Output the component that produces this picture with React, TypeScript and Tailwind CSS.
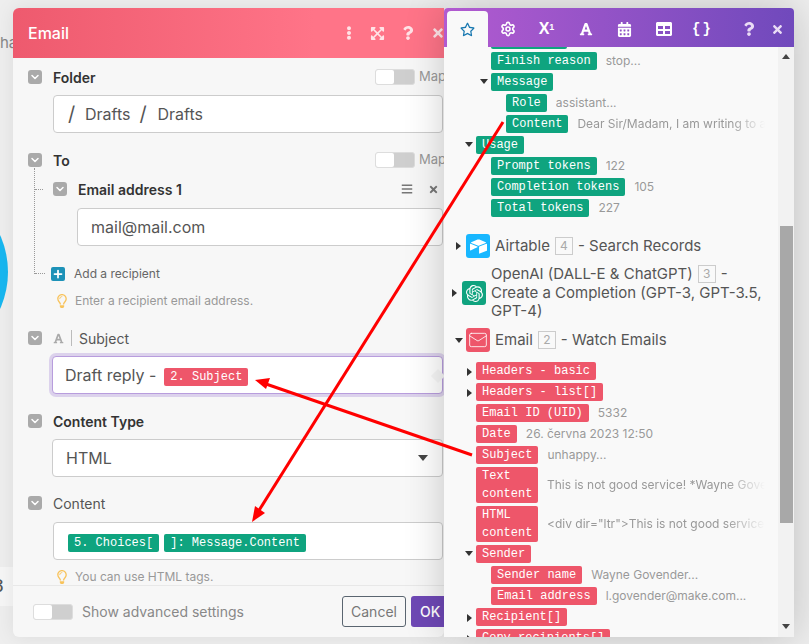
import { ChevronDown, Mail, Plus, Settings } from "lucide-react";
import {
  FaBars,
  FaCalendarAlt,
  FaEllipsisV,
  FaExpandArrowsAlt,
  FaFont,
  FaQuestion,
  FaRegLightbulb,
  FaRegStar,
  FaTable,
  FaTimes,
} from "react-icons/fa";
import { SiAirtable, SiOpenai } from "react-icons/si";

function Chevron({ className = "" }: { className?: string }) {
  return (
    <div className={`flex h-[14px] w-[14px] shrink-0 items-center justify-center rounded-[3px] bg-[#aaaaaa] ${className}`}>
      <ChevronDown size={12} strokeWidth={3} className="text-white" />
    </div>
  );
}

function MapToggle() {
  return (
    <div className="ml-auto flex w-[68px] shrink-0 items-center">
      <Toggle />
      <span className="ml-1 text-[13px] text-[#999999]">Map</span>
    </div>
  );
}

function Toggle() {
  return (
    <div className="h-[16px] w-[40px] shrink-0 rounded-[3px] border border-[#dddddd] bg-[#cfcfcf]">
      <div className="h-[14px] w-[18px] rounded-[2px] bg-white" />
    </div>
  );
}

function Pill({ label, color, className = "" }: { label: string; color: "green" | "red"; className?: string }) {
  return (
    <span
      className={`inline-block shrink-0 rounded-[2px] px-[6px] font-['Liberation_Mono',monospace] text-[12px] leading-[18px] whitespace-pre-wrap text-white ${
        color === "green" ? "bg-[#0fa47f]" : "bg-[#ee566a]"
      } ${className}`}
    >
      {label}
    </span>
  );
}

function Caret({ open }: { open?: boolean }) {
  return open ? (
    <svg width="8" height="5" viewBox="0 0 8 5" className="shrink-0">
      <path d="M0 0h8L4 5z" fill="#333" />
    </svg>
  ) : (
    <svg width="5" height="8" viewBox="0 0 5 8" className="shrink-0">
      <path d="M0 0l5 4-5 4z" fill="#333" />
    </svg>
  );
}

function Row({
  indent,
  label,
  value,
  color,
  caret,
  pillClass,
  fade,
}: {
  indent: string;
  label: string;
  value?: string;
  color: "green" | "red";
  caret?: "open" | "closed";
  pillClass?: string;
  fade?: boolean;
}) {
  return (
    <div className={`relative mb-[3px] flex items-center gap-[9px] pr-[13px] ${indent}`}>
      {caret && (
        <span className="absolute top-[6px] -ml-[11px] flex w-[8px] justify-center">
          <Caret open={caret === "open"} />
        </span>
      )}
      <Pill label={label} color={color} className={pillClass} />
      {value && (
        <span
          className={`min-w-0 overflow-hidden text-[12px] leading-[18px] whitespace-nowrap text-[#999999] ${
            fade ? "[mask-image:linear-gradient(to_right,black_82%,transparent)]" : ""
          }`}
        >
          {value}
        </span>
      )}
    </div>
  );
}

function Badge({ n, className = "" }: { n: number; className?: string }) {
  return (
    <span
      className={`inline-flex h-[18px] w-[18px] shrink-0 items-center justify-center border border-[#cccccc] text-[12px] leading-none text-[#aaaaaa] ${className}`}
    >
      {n}
    </span>
  );
}

function Hint({ text, className = "" }: { text: string; className?: string }) {
  return (
    <div className={`flex items-center ${className}`}>
      <FaRegLightbulb size={14} className="text-[#f8c35c]" />
      <span className="ml-[6px] text-[12px] leading-4 text-[#999999]">{text}</span>
    </div>
  );
}

function Input({ children, className = "" }: { children: React.ReactNode; className?: string }) {
  return (
    <div className={`flex h-[38px] items-center rounded-[4px] border border-[#cccccc] bg-white text-[16px] text-[#555555] ${className}`}>
      {children}
    </div>
  );
}

const tabIcon = "flex h-[36px] w-[39px] items-center justify-center text-white";

export default function App() {
  return (
    <div className="relative h-[644px] w-[809px] overflow-hidden bg-[#eeeeee] font-['Inter',sans-serif]">
      {/* what is behind the dialog */}
      <span className="absolute top-[34px] left-0 text-[15px] leading-[18px] text-[#888888]">ha</span>
      <div className="absolute top-[182px] left-[-172px] h-[180px] w-[180px] rounded-full bg-[#18b7f0]" />
      <div className="absolute top-[567px] left-0 h-[39px] w-[13px] overflow-hidden bg-[#f6f6f6] font-['Liberation_Mono',monospace] text-[20px] leading-[39px] text-[#555555]">
        <span className="-ml-[8px] block">8</span>
      </div>

      <div className="relative flex pt-[8px] pl-[13px]">
        {/* left panel */}
        <div className="flex h-[629px] w-[431px] flex-col overflow-hidden rounded-b-[6px] rounded-tl-[6px] bg-[#f7f7f7] shadow-[0_0_20px_rgba(0,0,0,0.08)]">
          <div className="flex h-[50px] shrink-0 items-center bg-gradient-to-r from-[#ee5a6e] to-[#ff7488] to-70% pl-[15px] text-white">
            <span className="text-[16px] font-medium">Email</span>
            <div className="ml-auto flex shrink-0 items-center text-[#ffe3e7]">
              <FaEllipsisV size={14} className="mr-[14px]" />
              <FaExpandArrowsAlt size={15} className="mr-[16px]" />
              <FaQuestion size={14} className="mr-[16px]" />
              <FaTimes size={14} className="mr-[-1px]" />
            </div>
          </div>

          <div className="min-h-0 flex-1 overflow-hidden pr-[1px] pl-[15px]">
            <div className="mt-[11px] flex h-[16px] items-center">
              <Chevron />
              <span className="ml-[11px] text-[14px] font-semibold text-[#333333]">Folder</span>
              <MapToggle />
            </div>
            <Input className="mt-[10px] ml-[25px] px-[14px]">
              <span className="mr-[9px] w-[8px] text-[20px]">/</span>Drafts
              <span className="mx-[9px] w-[9px] text-[20px]">/</span>Drafts
            </Input>

            <div className="mt-[19px] flex h-[16px] items-center">
              <Chevron />
              <span className="ml-[11px] text-[14px] font-semibold text-[#333333]">To</span>
              <MapToggle />
            </div>

            <div className="relative ml-[7px]">
              {/* dotted tree line */}
              <div className="absolute top-0 left-[-1px] h-[106px] w-[1px] border-l border-dotted border-[#999999]" />
              <div className="absolute top-[21px] left-0 w-[8px] border-t border-dotted border-[#999999]" />
              <div className="absolute top-[105px] left-0 w-[10px] border-t border-dotted border-[#999999]" />

              <div className="ml-[18px] pt-[14px]">
                <div className="flex h-[14px] items-center">
                  <Chevron />
                  <span className="ml-[11px] text-[14px] font-semibold text-[#333333]">Email address 1</span>
                  <FaBars size={12} className="mr-[15px] ml-auto text-[#777777]" />
                  <FaTimes size={11} className="mr-[4px] text-[#777777]" />
                </div>
                <Input className="mt-[12px] ml-[24px] px-[13px]">mail@mail.com</Input>
              </div>

              <div className="mt-[21px] ml-[16px] flex h-[14px] items-center">
                <div className="flex h-[14px] w-[14px] items-center justify-center rounded-[2px] bg-[#1d92b8]">
                  <Plus size={12} strokeWidth={3.5} className="text-white" />
                </div>
                <span className="ml-[9px] text-[12px] text-[#666666]">Add a recipient</span>
              </div>
            </div>

            <Hint text="Enter a recipient email address." className="mt-[12px] ml-[27px]" />

            <div className="mt-[21px] flex h-[16px] items-center">
              <Chevron />
              <FaFont size={11} className="ml-[11px] text-[#aaaaaa]" />
              <div className="mx-[7px] h-[16px] w-[1px] bg-[#bbbbbb]" />
              <span className="text-[14px] text-[#555555]">Subject</span>
            </div>
            <div className="mt-[10px] ml-[24px]">
              <div className="relative flex h-[38px] items-center rounded-[4px] border border-[#b89ddd] bg-white pl-[12px] text-[16px] text-[#555555] shadow-[0_0_0_3px_#dcd2ec]">
                Draft reply -
                <Pill label="2. Subject" color="red" className="mt-[4px] ml-[8px]" />
                <div className="absolute top-[14px] right-[-1px] h-[10px] w-[10px] rotate-45 bg-[#f7f7f7]" />
              </div>
            </div>

            <div className="mt-[19px] flex h-[16px] items-center">
              <Chevron />
              <span className="ml-[11px] text-[14px] font-semibold text-[#333333]">Content Type</span>
            </div>
            <Input className="mt-[10px] ml-[24px] px-[13px]">
              HTML
              <svg width="10" height="6" viewBox="0 0 10 6" className="mr-[1px] ml-auto">
                <path d="M0 0h10L5 6z" fill="#444" />
              </svg>
            </Input>

            <div className="mt-[18px] flex h-[16px] items-center">
              <Chevron />
              <span className="ml-[11px] text-[14px] text-[#555555]">Content</span>
            </div>
            <Input className="mt-[11px] ml-[25px] gap-[5px] px-[14px]">
              <Pill label="5. Choices[" color="green" className="mt-[3px]" />
              <Pill label="]: Message.Content" color="green" className="mt-[3px]" />
            </Input>
            <Hint text="You can use HTML tags." className="mt-[9px] ml-[27px]" />
          </div>

          <div className="flex h-[52px] shrink-0 items-center border-t border-[#e8e8e8] pl-[20px]">
            <Toggle />
            <span className="ml-[9px] text-[14px] text-[#888888]">Show advanced settings</span>
            <div className="mr-[-5px] ml-auto flex shrink-0 items-center gap-[5px]">
              <div className="flex h-[31px] w-[64px] items-center justify-center rounded-[3px] border border-[#5a6570] text-[14px] text-[#777777]">
                Cancel
              </div>
              <div className="flex h-[31px] w-[38px] items-center rounded-[3px] bg-[#6e48b5] pl-[9px] text-[14px] font-medium text-white">
                OK
              </div>
            </div>
          </div>
        </div>

        {/* right panel */}
        <div className="z-10 flex h-[629px] w-[350px] shrink-0 flex-col overflow-hidden rounded-t-[4px] bg-[#f9f9f9] shadow-[0_0_40px_rgba(0,0,0,0.2)]">
          <div className="flex h-[39px] shrink-0 items-end bg-gradient-to-r from-[#b25ad0] to-[#7049bc] pl-[3px]">
            <div className="flex h-[36px] w-[41px] items-center justify-center rounded-t-[4px] bg-[#f9f9f9]">
              <FaRegStar size={15} className="text-[#1878b0]" />
            </div>
            <div className={tabIcon}>
              <Settings size={16} strokeWidth={2.4} />
            </div>
            <div className={tabIcon}>
              <span className="font-['Liberation_Sans',sans-serif] text-[16px] font-bold">
                X<sup className="text-[9px]">1</sup>
              </span>
            </div>
            <div className={tabIcon}>
              <FaFont size={14} />
            </div>
            <div className={tabIcon}>
              <FaCalendarAlt size={15} />
            </div>
            <div className={tabIcon}>
              <FaTable size={16} />
            </div>
            <div className={tabIcon}>
              <span className="font-['Liberation_Mono',monospace] text-[14px] font-bold tracking-[2px]">{"{}"}</span>
            </div>
            <div className="ml-[13px] flex h-[36px] w-[28px] items-center justify-center text-[#eadcf5]">
              <FaQuestion size={14} />
            </div>
            <div className="flex h-[36px] w-[28px] items-center justify-center text-[#eadcf5]">
              <FaTimes size={13} />
            </div>
          </div>

          <div className="flex min-h-0 flex-1 overflow-hidden">
            <div className="-mt-[16px] min-w-0 flex-1">
              <Row indent="ml-[47px]" label="Index" color="green" pillClass="w-[76px]" />
              <Row indent="ml-[47px]" label="Finish reason" value="stop..." color="green" />
              <Row indent="ml-[47px]" label="Message" color="green" caret="open" />
              <Row indent="ml-[62px]" label="Role" value="assistant..." color="green" />
              <Row
                indent="ml-[62px]"
                label="Content"
                value="Dear Sir/Madam, I am writing to apologize for the inconvenience"
                color="green"
                fade
              />
              <Row indent="ml-[32px]" label="Usage" color="green" caret="open" />
              <Row indent="ml-[47px]" label="Prompt tokens" value="122" color="green" />
              <Row indent="ml-[47px]" label="Completion tokens" value="105" color="green" />
              <Row indent="ml-[47px]" label="Total tokens" value="227" color="green" />

              <div className="mt-[17px] flex h-[24px] items-center pl-[12px]">
                <Caret />
                <div className="ml-[5px] flex h-[24px] w-[24px] shrink-0 items-center justify-center rounded-[3px] bg-[#18b7ff]">
                  <SiAirtable size={17} className="text-white" />
                </div>
                <span className="ml-[5px] text-[15px] whitespace-nowrap text-[#555555]">Airtable</span>
                <Badge n={4} className="mx-[5px]" />
                <span className="text-[15px] whitespace-nowrap text-[#555555]">- Search Records</span>
              </div>

              <div className="mt-[6px] flex h-[58px] items-center pl-[8px]">
                <Caret />
                <div className="ml-[5px] flex h-[24px] w-[24px] shrink-0 items-center justify-center rounded-[3px] bg-[#10a37f]">
                  <SiOpenai size={17} className="text-white" />
                </div>
                <span className="ml-[5px] w-[276px] text-[15px] leading-[18.5px] text-[#555555]">
                  OpenAI (DALL-E &amp; ChatGPT)
                  <Badge n={3} className="mx-[5px] align-top" />- Create a Completion (GPT-3, GPT-3.5, GPT-4)
                </span>
              </div>

              <div className="mt-[6px] mb-[10px] flex h-[24px] items-center pl-[11px]">
                <Caret open />
                <div className="ml-[3px] flex h-[24px] w-[24px] shrink-0 items-center justify-center rounded-[3px] bg-[#ee566a]">
                  <Mail size={20} strokeWidth={1} className="text-white" />
                </div>
                <span className="ml-[5px] text-[15px] whitespace-nowrap text-[#555555]">Email</span>
                <Badge n={2} className="mx-[5px]" />
                <span className="text-[15px] whitespace-nowrap text-[#555555]">- Watch Emails</span>
              </div>

              <Row indent="ml-[32px]" label="Headers - basic" color="red" caret="closed" />
              <Row indent="ml-[32px]" label="Headers - list[]" color="red" caret="closed" />
              <Row indent="ml-[32px]" label="Email ID (UID)" value="5332" color="red" />
              <Row indent="ml-[32px]" label="Date" value="26. června 2023 12:50" color="red" />
              <Row indent="ml-[32px]" label="Subject" value="unhappy..." color="red" />
              <Row
                indent="ml-[32px]"
                label="Text content"
                value="This is not good service! *Wayne Govender*"
                color="red"
                pillClass="w-[62px]"
                fade
              />
              <Row
                indent="ml-[32px]"
                label="HTML content"
                value={'<div dir="ltr">This is not good service!</div>'}
                color="red"
                pillClass="w-[62px]"
                fade
              />
              <Row indent="ml-[32px]" label="Sender" color="red" caret="open" />
              <Row indent="ml-[47px]" label="Sender name" value="Wayne Govender..." color="red" />
              <Row indent="ml-[47px]" label="Email address" value="l.govender@make.com..." color="red" />
              <Row indent="ml-[32px]" label="Recipient[]" color="red" caret="closed" />
              <Row indent="ml-[32px]" label="Copy recipients[]" color="red" caret="closed" />
            </div>

            {/* scrollbar */}
            <div className="flex w-[16px] shrink-0 flex-col items-center bg-[#f2f2f2]">
              <svg width="8" height="5" viewBox="0 0 8 5" className="mt-[7px]">
                <path d="M4 0l4 5H0z" fill="#444" />
              </svg>
              <div className="mt-[167px] h-[297px] w-[13px] bg-[#a8a8a8]" />
              <svg width="8" height="5" viewBox="0 0 8 5" className="mt-auto mb-[8px]">
                <path d="M0 0h8L4 5z" fill="#444" />
              </svg>
            </div>
          </div>
        </div>
      </div>

      {/* red annotation arrows */}
      <svg width="809" height="644" viewBox="0 0 809 644" className="pointer-events-none absolute top-0 left-0 z-20">
        <path d="M503 122L258 512" stroke="#ff0000" strokeWidth="3" fill="none" />
        <path d="M252 522l3-16 10 7z" fill="#ff0000" />
        <path d="M472 455L266 384" stroke="#ff0000" strokeWidth="3" fill="none" />
        <path d="M255 380l15-2-4 11z" fill="#ff0000" />
      </svg>
    </div>
  );
}
